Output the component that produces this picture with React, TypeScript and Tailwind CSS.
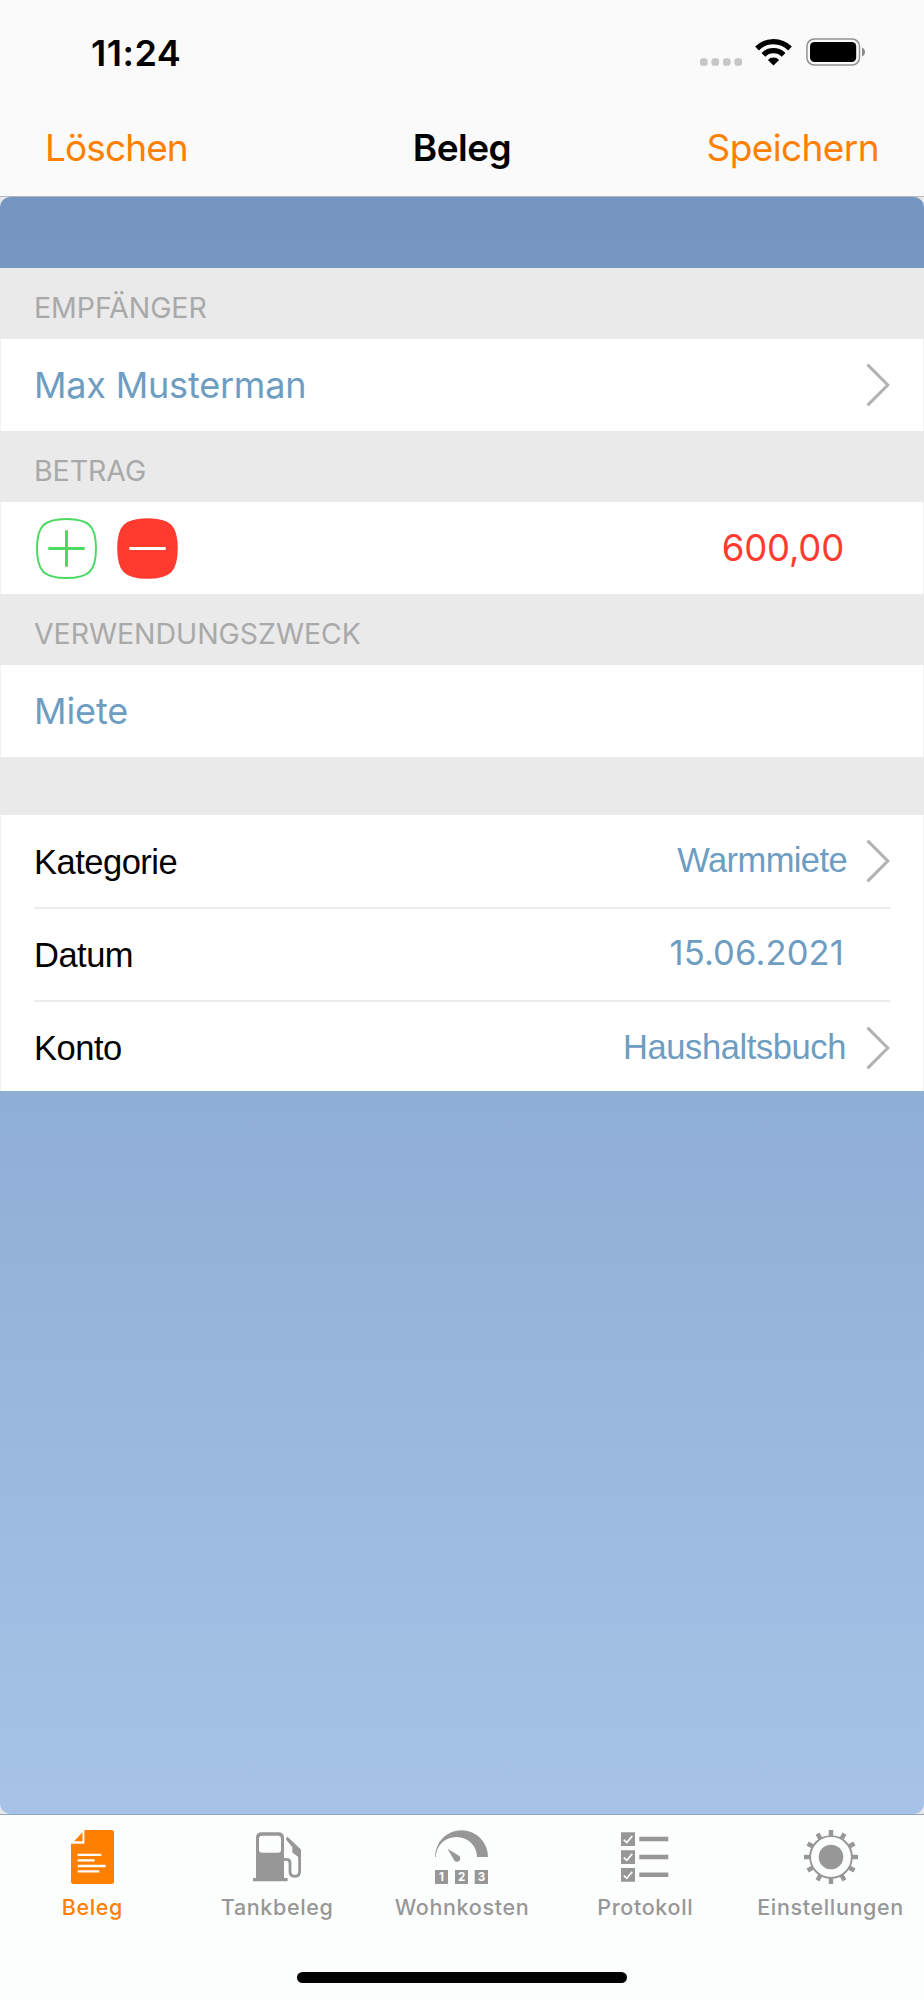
import type { ReactNode } from "react";

type RowProps = {
  label: string;
  value: string;
  valueClass: string;
  className: string;
  chevron?: boolean;
};

type TabProps = {
  label: string;
  active?: boolean;
  className?: string;
  children: ReactNode;
};

const SQUIRCLE = "M30.5 1C53 1 60 8 60 30.5S53 60 30.5 60S1 53 1 30.5S8 1 30.5 1Z";
const TEETH = Array.from({ length: 12 }, (_, index) => index * 30);

function StatusBar() {
  return (
    <div className="flex h-[105px] items-center justify-between pr-[59px] pl-[91px]">
      <span className="text-[36px] leading-none font-semibold tracking-[0.5px]">11:24</span>
      <div className="flex h-[29px] items-start gap-[14px]">
        <svg width="42" height="8" viewBox="0 0 42 8" fill="#c6c6c6" className="mt-5 -mr-px">
          <rect x="0" y="0.3" width="7.6" height="7.4" rx="2.8" />
          <rect x="11.5" y="0.3" width="7.6" height="7.4" rx="2.8" />
          <rect x="23" y="0.3" width="7.6" height="7.4" rx="2.8" />
          <rect x="34.4" y="0.3" width="7.6" height="7.4" rx="2.8" />
        </svg>
        <svg width="37" height="27" viewBox="0 0 37 27" fill="none" stroke="#000" strokeWidth="5.3" className="mt-px">
          <path d="M2 9.5A23.35 23.35 0 0 1 35 9.5" />
          <path d="M8.4 15.9A14.3 14.3 0 0 1 28.6 15.9" />
          <path d="M18.5 26.6L12.9 20.9A8 8 0 0 1 24.1 20.9Z" fill="#000" stroke="none" />
        </svg>
        <svg width="59" height="28" viewBox="0 0 59 28">
          <rect x="0.9" y="0.9" width="52.6" height="26.2" rx="7.5" fill="none" stroke="#929292" strokeWidth="1.5" />
          <rect x="4" y="4" width="46.2" height="20" rx="4.5" fill="#000" />
          <path d="M56 9.5Q59 11 59 14T56 18.5Z" fill="#8a8a8a" />
        </svg>
      </div>
    </div>
  );
}

function NavBar() {
  return (
    <div className="grid h-[85px] grid-cols-3 items-center px-[45px] text-[37px] leading-none">
      <button type="button" className="justify-self-start text-[#ff8000] tracking-[-0.9px]">
        Löschen
      </button>
      <h1 className="justify-self-center font-semibold tracking-[-0.5px]">Beleg</h1>
      <button type="button" className="justify-self-end text-[#ff8000] tracking-[-0.6px]">
        Speichern
      </button>
    </div>
  );
}

function Chevron() {
  return (
    <svg width="24" height="44" viewBox="0 0 24 44" fill="none" stroke="#b2b2b2" strokeWidth="3" className="shrink-0">
      <path d="M1.5 1.6L21.8 22L1.5 42.4" />
    </svg>
  );
}

function SectionLabel({ children }: { children: string }) {
  return (
    <h2 className="flex h-[71px] items-center bg-[#eaeaea] pt-[10px] pl-[34px] text-[28.5px] leading-none text-[#a9a9a9]">
      <span className="tracking-[-0.05px]">{children}</span>
    </h2>
  );
}

function DetailRow({ label, value, valueClass, className, chevron }: RowProps) {
  return (
    <div className={`flex items-center justify-between ${className}`}>
      <span className="pt-[2px] text-[34.5px] leading-none tracking-[-0.5px]">{label}</span>
      <div className="flex items-center">
        <span className={`leading-none text-[#6e9dc2] ${valueClass}`}>{value}</span>
        {chevron ? <Chevron /> : null}
      </div>
    </div>
  );
}

function Tab({ label, active, className = "", children }: TabProps) {
  return (
    <button
      type="button"
      className={`flex w-1/5 shrink-0 flex-col items-center ${active ? "text-[#ff8000]" : "text-[#979797]"} ${className}`}
    >
      {children}
      <span className="mt-[9px] text-[21.5px] leading-7 font-medium tracking-[0.65px] whitespace-nowrap">{label}</span>
    </button>
  );
}

function ReceiptIcon() {
  return (
    <svg width="43" height="54" viewBox="0 0 43 54" fill="currentColor">
      <path d="M13.4 0H40.5Q43 0 43 2.5V51.5Q43 54 40.5 54H2.5Q0 54 0 51.5V13.7H13.4Z" />
      <path d="M3 11.2L11.5 2.2V11.2Z" />
      <path d="M6.7 24.9H30.3M6.7 30.4H23.6M6.7 36H34.6M6.7 41.4H28.3" stroke="#fff" strokeWidth="2.4" />
    </svg>
  );
}

function FuelIcon() {
  return (
    <svg width="48" height="54" viewBox="0 0 48 54" fill="currentColor">
      <path
        fillRule="evenodd"
        d="M8.5 2.3H25.5Q31 2.3 31 7.8V48H34.6V51.3H0V48H3V7.8Q3 2.3 8.5 2.3ZM9 5.7Q6 5.7 6 8.7V19.7Q6 22.7 9 22.7H25Q28 22.7 28 19.7V8.7Q28 5.7 25 5.7Z"
      />
      <path d="M34.2 6.5L48 19.4V29L39.3 22.5V17L32.9 9.6Z" />
      <path d="M31 29.4H33.5Q37 29.4 37 33V41.5Q37 46.3 41.8 46.3T46.6 41.5V20" fill="none" stroke="currentColor" strokeWidth="2.8" />
    </svg>
  );
}

function MeterIcon() {
  return (
    <svg width="53" height="54" viewBox="0 0 53 54" fill="currentColor">
      <path d="M0 27A26.5 26.8 0 0 1 53 27H42A20.6 20 0 0 0 0.8 27Z" />
      <path d="M12.5 18.8L23.6 25.5A3.4 3.4 0 1 1 18.7 29.6Z" />
      <path d="M0 40H13V54H0ZM20 40H33V54H20ZM39.7 40H53V54H39.7Z" />
      <g fill="#fff" fontSize="11.5" fontWeight="700" textAnchor="middle">
        <text x="6.4" y="51.4">1</text>
        <text x="26.5" y="51.4">2</text>
        <text x="46.4" y="51.4">3</text>
      </g>
    </svg>
  );
}

function ChecklistIcon() {
  return (
    <svg width="48" height="54" viewBox="0 0 48 54" fill="currentColor">
      <path d="M0 2.3H14V16H0ZM0 20.2H14V33.9H0ZM0 38.1H14V51.8H0Z" />
      <path d="M18.3 6.8H47.3V11.3H18.3ZM18.3 24.7H47.3V29.2H18.3ZM18.3 42.6H47.3V47.1H18.3Z" />
      <path
        d="M2.8 9.8L5.8 12.5L11.3 6M2.8 27.7L5.8 30.4L11.3 23.9M2.8 45.6L5.8 48.3L11.3 41.8"
        fill="none"
        stroke="#fff"
        strokeWidth="1.7"
      />
    </svg>
  );
}

function GearIcon() {
  return (
    <svg width="54" height="54" viewBox="0 0 54 54" fill="currentColor">
      <circle cx="27" cy="27" r="12.3" />
      <circle cx="27" cy="27" r="20.9" fill="none" stroke="currentColor" strokeWidth="1.9" />
      {TEETH.map((angle) => (
        <rect key={angle} x="24.8" y="0" width="4.4" height="6" transform={`rotate(${angle} 27 27)`} />
      ))}
    </svg>
  );
}

export default function App() {
  return (
    <div className="flex h-[2000px] w-[924px] flex-col overflow-hidden bg-[#fafafa] font-[Inter,sans-serif] text-black">
      <header className="h-[196px] shrink-0">
        <StatusBar />
        <NavBar />
      </header>

      <main className="flex-1 border-t border-[#b5b8bc] bg-[#e9e9e9]">
        <div className="h-full overflow-hidden rounded-[10px] bg-linear-to-b from-[#7495c0] to-[#a6c3e7] pt-[71px]">
          <SectionLabel>EMPFÄNGER</SectionLabel>
          <div className="flex h-[92px] items-center justify-between border-x border-[#f1f1f1] bg-white pr-[33px] pl-[33px]">
            <span className="text-[36px] leading-none tracking-[-0.2px] text-[#6e9dc2]">Max Musterman</span>
            <Chevron />
          </div>

          <SectionLabel>BETRAG</SectionLabel>
          <div className="flex h-[92px] items-center justify-between border-x border-[#f1f1f1] bg-white pr-[79px] pl-[35px]">
            <div className="flex gap-5">
              <button type="button" aria-label="Einnahme">
                <svg width="61" height="61" viewBox="0 0 61 61" fill="none" stroke="#4cd964">
                  <path d={SQUIRCLE} strokeWidth="2" />
                  <path d="M12.3 30.5H48.7M30.5 12.3V48.7" strokeWidth="3" />
                </svg>
              </button>
              <button type="button" aria-label="Ausgabe">
                <svg width="61" height="61" viewBox="0 0 61 61" fill="#ff3b30">
                  <path d={SQUIRCLE} stroke="#ff3b30" strokeWidth="1.6" />
                  <path d="M12.3 30.5H48.7" stroke="#fff" strokeWidth="3.2" />
                </svg>
              </button>
            </div>
            <span className="text-[36.5px] leading-none tracking-[-0.2px] text-[#ff3b30]">600,00</span>
          </div>

          <SectionLabel>VERWENDUNGSZWECK</SectionLabel>
          <div className="flex h-[92px] items-center border-x border-[#f1f1f1] bg-white pl-[33px]">
            <span className="text-[36px] leading-none tracking-[-0.1px] text-[#6e9dc2]">Miete</span>
          </div>

          <div className="h-[58px] bg-[#eaeaea]" />

          <div className="h-[276px] border-x border-[#f1f1f1] bg-white px-[33px] font-['Liberation_Sans',sans-serif]">
            <DetailRow
              label="Kategorie"
              value="Warmmiete"
              valueClass="mr-[19px] pb-[1px] text-[34.5px] tracking-[-0.6px]"
              className="h-[92px]"
              chevron
            />
            <DetailRow
              label="Datum"
              value="15.06.2021"
              valueClass="mr-[46px] pb-[2px] text-[34.5px] font-[Inter,sans-serif] tracking-[0.15px]"
              className="h-[95px] border-y-2 border-[#ececec]"
            />
            <DetailRow
              label="Konto"
              value="Haushaltsbuch"
              valueClass="mr-[20px] text-[34.5px] tracking-[-0.4px]"
              className="h-[91px]"
              chevron
            />
          </div>
        </div>
      </main>

      <footer className="flex h-[186px] shrink-0 flex-col border-t border-[#8fa5c0] bg-[#fcfdfd]">
        <nav className="flex pt-[15px]">
          <Tab label="Beleg" active>
            <ReceiptIcon />
          </Tab>
          <Tab label="Tankbeleg">
            <FuelIcon />
          </Tab>
          <Tab label="Wohnkosten">
            <MeterIcon />
          </Tab>
          <Tab label="Protokoll" className="pr-[3px]">
            <ChecklistIcon />
          </Tab>
          <Tab label="Einstellungen" className="pr-[2px]">
            <GearIcon />
          </Tab>
        </nav>
        <div className="mx-auto mt-[51px] h-[11px] w-[330px] rounded-full bg-black" />
      </footer>
    </div>
  );
}
